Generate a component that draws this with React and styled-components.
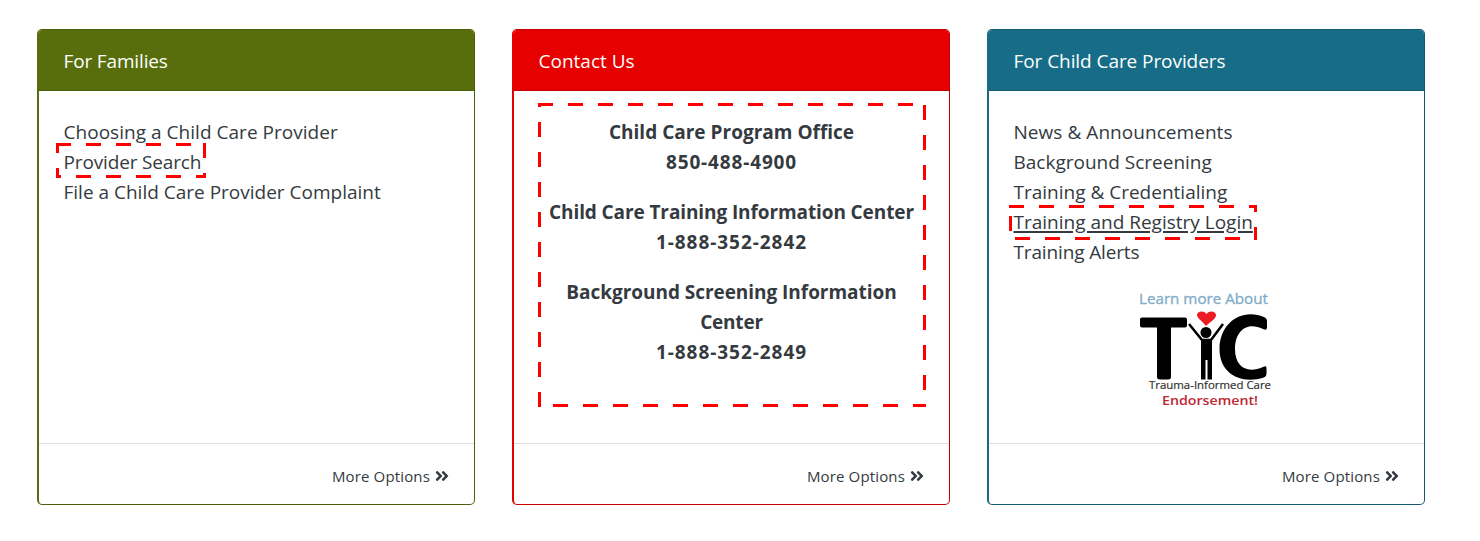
import React from "react";
import styled, { createGlobalStyle } from "styled-components";
import { FaAngleDoubleRight } from "react-icons/fa";

const GlobalStyle = createGlobalStyle`
  * { box-sizing: border-box; }
  body {
    margin: 0;
    background: #fff;
    color: #343a40;
    font-family: "Open Sans", "Noto Sans", sans-serif;
  }
`;

const Page = styled.main`
  display: grid;
  grid-template-columns: repeat(3, 438px);
  gap: 37px;
  padding: 29px 37px 36px;
`;

const Card = styled.section`
  display: flex;
  flex-direction: column;
  height: 476px;
  border: 1px solid ${(p) => p.$edge};
  border-left: 2px solid ${(p) => p.$tone};
  border-radius: 5px;
  overflow: hidden;
`;

const CardHeader = styled.header`
  height: 61px;
  padding: 16px 24px 0 24.5px;
  background: ${(p) => p.$tone};
  border-bottom: 1px solid ${(p) => p.$edge};
  color: #fff;
  font-size: 19px;
  line-height: 30px;
`;

const CardBody = styled.div`
  flex: 1;
  padding: 26px 24px 0;
`;

const CardFooter = styled.footer`
  display: flex;
  justify-content: flex-end;
  align-items: center;
  gap: 4px;
  height: 61px;
  padding: 4px 24px 0 0;
  border-top: 1px solid #dfdfdf;
  font-size: 15px;
  line-height: 24px;
  svg { display: block; }
`;

const LinkList = styled.ul`
  list-style: none;
  margin: 0;
  padding: 0 0 0 0.5px;
`;

const LinkItem = styled.li`
  position: relative;
  height: 30px;
  font-size: 19px;
  line-height: 30px;
  white-space: nowrap;
`;

const Label = styled.span`
  letter-spacing: ${(p) => p.$track || 0}px;
  text-decoration: ${(p) => (p.$underlined ? "underline" : "none")};
  text-decoration-thickness: 2px;
  text-underline-offset: 2px;
`;

const Contacts = styled.div`
  position: relative;
  text-align: center;
  font-size: 19px;
  font-weight: 700;
  line-height: 30px;
`;

const Contact = styled.p`
  margin: 0 0 20px;
  white-space: nowrap;
`;

const Frame = styled.svg`
  position: absolute;
  left: ${(p) => p.$x}px;
  top: ${(p) => p.$y}px;
  pointer-events: none;
`;

const Logo = styled.svg`
  display: block;
  margin: 17px 0 0 122px;
`;

/* Each edge lists the [start, end] spans of its dashes. */
function DashedFrame({ x, y, width: w, height: h, top, right, bottom, left }) {
  const d = [
    ...top.map(([a, b]) => `M${a} 0H${b}V3H${a}Z`),
    ...bottom.map(([a, b]) => `M${a} ${h - 3}H${b}V${h}H${a}Z`),
    ...left.map(([a, b]) => `M0 ${a}H3V${b}H0Z`),
    ...right.map(([a, b]) => `M${w - 3} ${a}H${w}V${b}H${w - 3}Z`),
  ].join("");
  return (
    <Frame $x={x} $y={y} width={w} height={h} aria-hidden="true">
      <path d={d} fill="#ff0000" />
    </Frame>
  );
}

const dashes = (first, count) =>
  Array.from({ length: count }, (_, i) => [first + i * 30, first + i * 30 + 15]);

function TicLogo() {
  return (
    <Logo width="142" height="126" viewBox="1135 284 142 126" role="img" aria-label="TIC">
      <g fontFamily="Open Sans, sans-serif">
        <text x="1139" y="303.5" fontSize="14.5" fill="#7fabc9" stroke="#7fabc9" strokeWidth=".3" textLength="129" lengthAdjust="spacingAndGlyphs">Learn more About</text>
        <text x="1149" y="389" fontSize="11" fill="#333" stroke="#333" strokeWidth=".2" textLength="122" lengthAdjust="spacingAndGlyphs">Trauma-Informed Care</text>
        <text x="1162" y="405" fontSize="13" fontWeight="600" fill="#bd2733" textLength="96" lengthAdjust="spacingAndGlyphs">Endorsement!</text>
      </g>
      <path d="M1142 317.500H1185Q1187 317.500 1187 319.500V325.500Q1187 327.500 1185 327.500H1171V377Q1171 379.500 1168 379.500H1160Q1157 379.500 1157 377V327.500H1142Q1140 327.500 1140 325.500V319.500Q1140 317.500 1142 317.500Z" />
      <path d="M1265 317.500Q1267 318.500 1267 321V328Q1266.500 331 1263 329C1246 321 1235 332 1235 349C1235 367 1247 374 1263 367Q1266.500 365 1266.500 368V374Q1266.500 376.500 1264 377.500C1240 385 1219.500 373 1219.500 349C1219.500 323 1242 307 1265 317.500Z" />
      <path d="M1206 326C1202 321 1197 318 1197 315C1197 311 1204 310 1206.500 314C1209 310 1216 311 1216 315C1216 319 1211 321 1206 326Z" fill="#ed1c24" />
      <circle cx="1206" cy="332.500" r="5.500" />
      <path d="M1189 324L1202 340H1211L1223 324" fill="none" stroke="#000" strokeWidth="2.500" />
      <path d="M1201 339H1212V379.500H1207.500V360H1205.500V379.500H1201Z" />
    </Logo>
  );
}

function MoreOptions() {
  return (
    <CardFooter>
      <Label $track={0.15}>More Options</Label>
      <FaAngleDoubleRight size={16} />
    </CardFooter>
  );
}

export default function App() {
  return (
    <>
      <GlobalStyle />
      <Page>
        <Card $tone="#586e0c" $edge="#4c5f0a">
          <CardHeader $tone="#586e0c" $edge="#4c5f0a"><Label $track={-0.15}>For Families</Label></CardHeader>
          <CardBody>
            <LinkList>
              <LinkItem><Label $track={0.03}>Choosing a Child Care Provider</Label></LinkItem>
              <LinkItem>
                <Label $track={-0.15}>Provider Search</Label>
                <DashedFrame x={-7.5} y={-4} width={150} height={35}
                  top={dashes(0, 5)} right={[[0, 15], [30, 35]]}
                  bottom={[[0, 5], ...dashes(20, 4), [140, 150]]} left={[[0, 10], [25, 35]]} />
              </LinkItem>
              <LinkItem><Label>File a Child Care Provider Complaint</Label></LinkItem>
            </LinkList>
          </CardBody>
          <MoreOptions />
        </Card>

        <Card $tone="#e60000" $edge="#c40000">
          <CardHeader $tone="#e60000" $edge="#c40000"><Label>Contact Us</Label></CardHeader>
          <CardBody>
            <Contacts>
              <Contact><Label $track={0.01}>Child Care Program Office</Label><br /><Label $track={0.85}>850-488-4900</Label></Contact>
              <Contact><Label $track={-0.1}>Child Care Training Information Center</Label><br /><Label $track={0.95}>1-888-352-2842</Label></Contact>
              <Contact><Label $track={-0.04}>Background Screening Information</Label><br /><Label $track={-0.2}>Center</Label><br /><Label $track={0.95}>1-888-352-2849</Label></Contact>
              <DashedFrame x={0} y={-14} width={388} height={304}
                top={dashes(0, 13)} right={dashes(2, 10)}
                bottom={[...dashes(15, 12), [375, 388]]} left={[[0, 4], ...dashes(19, 10)]} />
            </Contacts>
          </CardBody>
          <MoreOptions />
        </Card>

        <Card $tone="#176d87" $edge="#145c73">
          <CardHeader $tone="#176d87" $edge="#145c73"><Label $track={-0.07}>For Child Care Providers</Label></CardHeader>
          <CardBody>
            <LinkList>
              <LinkItem><Label $track={0.05}>News &amp; Announcements</Label></LinkItem>
              <LinkItem><Label>Background Screening</Label></LinkItem>
              <LinkItem><Label>Training &amp; Credentialing</Label></LinkItem>
              <LinkItem>
                <Label $underlined>Training and Registry Login</Label>
                <DashedFrame x={-4.5} y={-2} width={248} height={35}
                  top={[...dashes(0, 8), [240, 248]]} right={[[0, 7], [22, 35]]}
                  bottom={dashes(6, 8)} left={[[11, 26]]} />
              </LinkItem>
              <LinkItem><Label $track={-0.14}>Training Alerts</Label></LinkItem>
            </LinkList>
            <TicLogo />
          </CardBody>
          <MoreOptions />
        </Card>
      </Page>
    </>
  );
}
